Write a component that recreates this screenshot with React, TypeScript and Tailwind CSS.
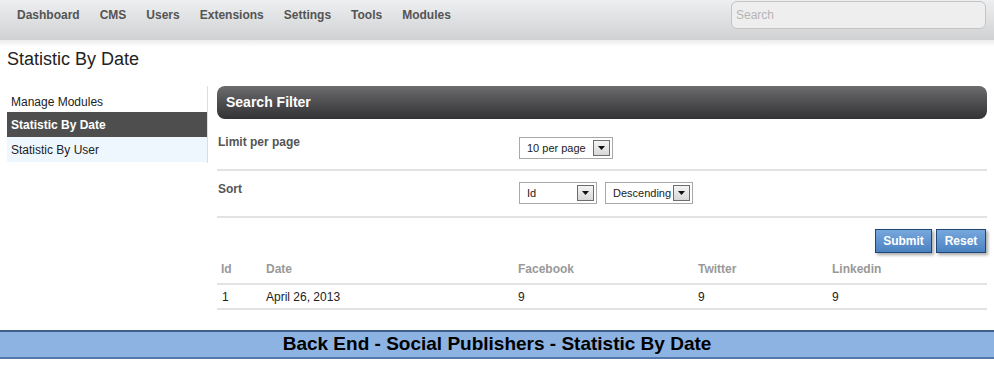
import React from 'react'

const nav = ['Dashboard', 'CMS', 'Users', 'Extensions', 'Settings', 'Tools', 'Modules']

function FakeSelect({ value, width }: { value: string; width: string }) {
  return (
    <div className={`flex h-[22px] items-center justify-between border border-[#a9a9a9] bg-white pl-[7px] pr-[2px] text-[11px] text-[#222] ${width}`}>
      <span>{value}</span>
      <span className="flex h-[16px] w-[17px] items-center justify-center border border-[#6d6d6d] bg-gradient-to-b from-[#f4f4f4] to-[#d7d7d7]">
        <svg width="7" height="4" viewBox="0 0 7 4"><path d="M0 0h7L3.5 4z" fill="#111" /></svg>
      </span>
    </div>
  )
}

export default function App() {
  return (
    <div className="h-[367px] w-[994px] overflow-hidden bg-white font-['Liberation_Sans',Arial,sans-serif]">
      {/* top bar */}
      <div className="flex h-[40px] items-start justify-between bg-gradient-to-b from-[#eeeff0] to-[#d0d1d3]">
        <div className="flex gap-[20px] pl-[17px] pt-[6px] text-[12px] font-bold text-[#545454]">
          {nav.map(n => <span key={n}>{n}</span>)}
        </div>
        <div className="mr-[8px] mt-[1px] flex h-[28px] w-[255px] items-center rounded-[6px] border border-[#c4c4c4] bg-[#eeeeee] px-[4px] text-[12px] text-[#b5b5b5]">
          Search
        </div>
      </div>
      <div className="h-[7px] bg-gradient-to-b from-[#ececec] to-white" />

      <div className="px-[7px] text-[18px] leading-[24px] text-[#222]">Statistic By Date</div>

      <div className="mt-[19px] flex items-start">
        {/* sidebar */}
        <div className="-mt-[4px] ml-[7px] w-[201px] border-r border-[#dddddd] pb-[1px] pt-[4px] text-[12px]">
          <div className="flex h-[22px] items-center px-[4px] pt-[2px] text-[#222]">Manage Modules</div>
          <div className="flex h-[25px] items-center bg-[#4e4e4e] px-[4px] font-bold text-white">Statistic By Date</div>
          <div className="flex h-[25px] items-center bg-[#eff7fe] px-[4px] text-[#222]">Statistic By User</div>
        </div>

        {/* main */}
        <div className="-mt-[4px] ml-[9px] w-[770px]">
          <div className="flex h-[33px] items-center rounded-[8px] bg-gradient-to-b from-[#6c6c6e] to-[#333335] pl-[9px] text-[14px] font-bold text-white">
            Search Filter
          </div>

          <div className="flex h-[52px] border-b-2 border-[#e3e3e3] pt-[14px]">
            <div className="w-[302px] pl-[1px] text-[12px] font-bold text-[#555]">Limit per page</div>
            <div className="pt-[4px]"><FakeSelect value="10 per page" width="w-[94px]" /></div>
          </div>

          <div className="flex h-[47px] border-b-2 border-[#e3e3e3] pt-[9px]">
            <div className="w-[302px] pl-[1px] text-[12px] font-bold text-[#555]">Sort</div>
            <div className="flex gap-[8px] pt-[2px]">
              <FakeSelect value="Id" width="w-[78px]" />
              <FakeSelect value="Descending" width="w-[88px]" />
            </div>
          </div>

          <div className="flex justify-end gap-[4px] pr-[1px] pt-[11px]">
            <button className="h-[24px] w-[57px] border border-[#1e4775] bg-gradient-to-b from-[#77a7dd] to-[#4c82c2] text-[12px] font-bold text-white shadow-[2px_2px_3px_rgba(0,0,0,0.35)]">Submit</button>
            <button className="h-[24px] w-[50px] border border-[#1e4775] bg-gradient-to-b from-[#77a7dd] to-[#4c82c2] text-[12px] font-bold text-white shadow-[2px_2px_3px_rgba(0,0,0,0.35)]">Reset</button>
          </div>

          <div className="mt-[1px] text-[12px]">
            <div className="flex h-[31px] items-center border-b-2 border-[#e3e3e3] font-bold text-[#999]">
              <span className="w-[49px] pl-[4px]">Id</span>
              <span className="w-[252px]">Date</span>
              <span className="w-[180px]">Facebook</span>
              <span className="w-[134px]">Twitter</span>
              <span>Linkedin</span>
            </div>
            <div className="flex h-[25px] items-center border-b-2 border-[#e3e3e3] text-[#222]">
              <span className="w-[49px] pl-[5px]">1</span>
              <span className="w-[252px]">April 26, 2013</span>
              <span className="w-[180px]">9</span>
              <span className="w-[134px]">9</span>
              <span>9</span>
            </div>
          </div>
        </div>
      </div>

      {/* footer */}
      <div className="mt-[20px] flex h-[29px] items-center justify-center border-t-2 border-b-2 border-t-[#3f5f8c] border-b-[#5479ab] bg-[#8db3e2] text-[19px] font-bold text-black">
        Back End - Social Publishers - Statistic By Date
      </div>
    </div>
  )
}
